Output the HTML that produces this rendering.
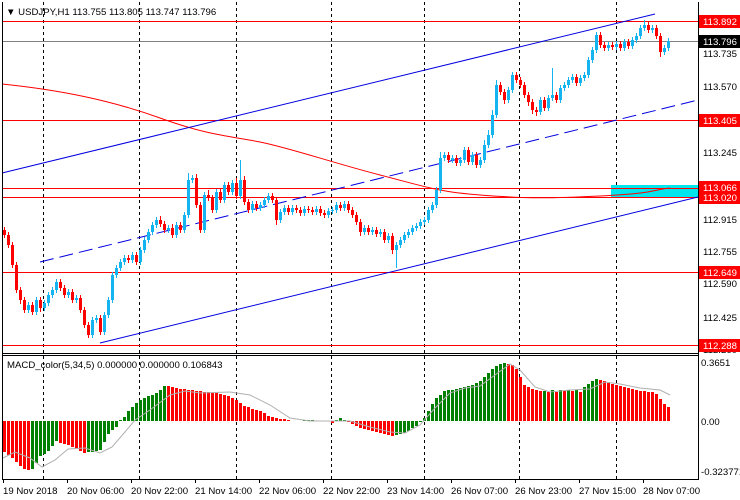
<!DOCTYPE html>
<html><head><meta charset="utf-8"><style>
html,body{margin:0;padding:0;background:#fff;width:740px;height:500px;overflow:hidden}
svg{display:block;font-family:"Liberation Sans",sans-serif;font-size:9.6px}
</style></head><body>
<svg width="740" height="500" xmlns="http://www.w3.org/2000/svg">
<rect width="740" height="500" fill="#fff"/>
<g stroke="#000" stroke-dasharray="3,3" stroke-width="1">
<line x1="43.5" y1="2" x2="43.5" y2="479"/><line x1="139.5" y1="2" x2="139.5" y2="479"/>
<line x1="236.5" y1="2" x2="236.5" y2="479"/><line x1="331.5" y1="2" x2="331.5" y2="479"/>
<line x1="424.5" y1="2" x2="424.5" y2="479"/><line x1="519.5" y1="2" x2="519.5" y2="479"/>
<line x1="616.5" y1="2" x2="616.5" y2="479"/>
</g>
<rect x="611" y="185" width="87" height="12" fill="#00e5ee"/>
<g stroke="#f00" stroke-width="1">
<line x1="2" y1="21.5" x2="698" y2="21.5"/><line x1="2" y1="120.5" x2="698" y2="120.5"/>
<line x1="2" y1="188.5" x2="698" y2="188.5"/><line x1="2" y1="197.5" x2="698" y2="197.5"/>
<line x1="2" y1="272.5" x2="698" y2="272.5"/><line x1="2" y1="345.5" x2="698" y2="345.5"/>
</g>
<line x1="2" y1="41.5" x2="698" y2="41.5" stroke="#808080"/>
<path d="M2,84 C60,90 110,100 160,118 S230,136 260,142 S330,162 380,175 S440,192 480,195 S540,199 600,196 S650,190 670,188" fill="none" stroke="#f00"/>
<g stroke="#0000e0" fill="none">
<line x1="2" y1="173" x2="655" y2="14"/>
<line x1="40" y1="262" x2="698" y2="100" stroke-dasharray="14,6"/>
<line x1="100" y1="343" x2="698" y2="197"/>
</g>
<!-- red candles -->
<path fill="#f00" stroke="none" d="M3,230h3v5h-3zM7,235h3v10h-3zM11,245h3v20h-3zM15,265h3v25h-3zM19,290h3v10h-3zM23,300h3v10h-3zM31,305h3v7h-3zM39,300h3v8h-3zM59,282h3v6h-3zM63,288h3v7h-3zM71,292h3v8h-3zM79,298h3v12h-3zM83,310h3v15h-3zM87,325h3v10h-3zM99,318h3v14h-3zM127,258h3v2h-3zM135,255h3v7h-3zM159,220h3v4h-3zM163,224h3v6h-3zM171,228h3v7h-3zM179,225h3v5h-3zM195,178h3v27h-3zM199,205h3v25h-3zM207,195h3v3h-3zM211,198h3v12h-3zM219,192h3v8h-3zM227,185h3v7h-3zM235,183h3v13h-3zM243,180h3v22h-3zM247,202h3v8h-3zM255,204h3v4h-3zM271,196h3v4h-3zM275,200h3v20h-3zM287,208h3v4h-3zM295,208h3v2h-3zM299,210h3v3h-3zM307,209h3v1h-3zM311,210h3v2h-3zM319,209h3v4h-3zM323,213h3v2h-3zM339,205h3v3h-3zM347,204h3v6h-3zM351,210h3v5h-3zM355,215h3v7h-3zM359,222h3v10h-3zM367,228h3v4h-3zM375,230h3v4h-3zM383,232h3v8h-3zM391,236h3v14h-3zM447,155h3v5h-3zM455,158h3v5h-3zM467,150h3v12h-3zM475,155h3v10h-3zM499,85h3v7h-3zM503,92h3v8h-3zM515,75h3v5h-3zM519,80h3v5h-3zM523,85h3v10h-3zM527,95h3v7h-3zM531,102h3v8h-3zM535,110h3v2h-3zM543,100h3v8h-3zM555,95h3v5h-3zM575,77h3v6h-3zM599,35h3v10h-3zM603,45h3v3h-3zM611,45h3v2h-3zM619,44h3v4h-3zM627,42h3v4h-3zM647,25h3v5h-3zM655,28h3v8h-3zM659,36h3v16h-3z"/>
<path fill="none" stroke="#f00" d="M4.5,227V238M8.5,232V248M12.5,242V268M16.5,262V293M20.5,287V304M24.5,297V313M32.5,302V315M40.5,297V312M60.5,279V291M64.5,285V298M72.5,289V303M80.5,295V313M84.5,307V328M88.5,322V338M100.5,315V335M128.5,255V263M136.5,252V265M160.5,216V227M164.5,221V233M172.5,224V238M180.5,222V233M196.5,174V208M200.5,202V233M208.5,190V201M212.5,195V213M220.5,188V203M228.5,182V195M236.5,178V199M244.5,176V205M248.5,199V213M256.5,201V211M272.5,193V203M276.5,197V225M288.5,205V215M296.5,205V213M300.5,207V216M308.5,206V213M312.5,207V215M320.5,206V216M324.5,210V218M340.5,202V211M348.5,201V213M352.5,207V218M356.5,212V225M360.5,219V236M368.5,225V235M376.5,227V237M384.5,229V243M392.5,233V254M448.5,152V163M456.5,155V166M468.5,147V165M476.5,152V168M500.5,82V95M504.5,89V104M516.5,72V83M520.5,77V88M524.5,82V98M528.5,92V106M532.5,99V114M536.5,107V116M544.5,97V111M556.5,92V103M576.5,74V86M600.5,32V48M604.5,42V51M612.5,42V50M620.5,41V51M628.5,39V49M648.5,22V33M656.5,25V39M660.5,33V57"/>
<!-- blue candles -->
<path fill="#14b4f0" stroke="none" d="M27,305h3v5h-3zM35,300h3v12h-3zM43,303h3v5h-3zM47,295h3v8h-3zM51,290h3v5h-3zM55,282h3v8h-3zM67,292h3v3h-3zM75,298h3v2h-3zM91,320h3v15h-3zM95,318h3v2h-3zM103,315h3v17h-3zM107,300h3v15h-3zM111,275h3v25h-3zM115,268h3v7h-3zM119,262h3v6h-3zM123,258h3v4h-3zM131,255h3v5h-3zM139,250h3v12h-3zM143,240h3v10h-3zM147,232h3v8h-3zM151,225h3v7h-3zM155,220h3v5h-3zM167,228h3v2h-3zM175,225h3v10h-3zM183,215h3v15h-3zM187,180h3v35h-3zM191,178h3v2h-3zM203,195h3v35h-3zM215,192h3v18h-3zM223,185h3v15h-3zM231,183h3v9h-3zM239,180h3v16h-3zM251,204h3v6h-3zM259,205h3v3h-3zM263,200h3v5h-3zM267,196h3v4h-3zM279,212h3v8h-3zM283,208h3v4h-3zM291,208h3v4h-3zM303,209h3v4h-3zM315,209h3v3h-3zM327,211h3v4h-3zM331,210h3v1h-3zM335,205h3v5h-3zM343,204h3v4h-3zM363,228h3v4h-3zM371,230h3v2h-3zM379,232h3v2h-3zM387,236h3v4h-3zM395,245h3v5h-3zM399,240h3v5h-3zM403,235h3v5h-3zM407,232h3v3h-3zM411,228h3v4h-3zM415,226h3v2h-3zM419,222h3v4h-3zM423,220h3v2h-3zM427,210h3v10h-3zM431,205h3v5h-3zM435,190h3v15h-3zM439,158h3v32h-3zM443,155h3v3h-3zM451,158h3v2h-3zM459,160h3v3h-3zM463,150h3v10h-3zM471,155h3v7h-3zM479,160h3v5h-3zM483,145h3v15h-3zM487,135h3v10h-3zM491,115h3v20h-3zM495,85h3v30h-3zM507,90h3v10h-3zM511,75h3v15h-3zM539,100h3v12h-3zM547,98h3v10h-3zM551,95h3v3h-3zM559,88h3v12h-3zM563,85h3v3h-3zM567,80h3v5h-3zM571,77h3v3h-3zM579,78h3v5h-3zM583,75h3v3h-3zM587,60h3v15h-3zM591,50h3v10h-3zM595,35h3v15h-3zM607,45h3v3h-3zM615,44h3v3h-3zM623,42h3v6h-3zM631,40h3v6h-3zM635,36h3v4h-3zM639,28h3v8h-3zM643,25h3v3h-3zM651,28h3v2h-3zM663,48h3v4h-3zM667,41h3v7h-3z"/>
<path fill="none" stroke="#14b4f0" d="M28.5,302V313M36.5,297V315M44.5,300V311M48.5,292V306M52.5,287V298M56.5,279V293M68.5,289V298M76.5,295V303M92.5,317V338M96.5,315V323M104.5,312V335M108.5,297V318M112.5,272V303M116.5,265V278M120.5,259V271M124.5,255V265M132.5,252V263M140.5,247V265M144.5,237V253M148.5,229V243M152.5,222V235M156.5,217V228M168.5,225V233M176.5,222V238M184.5,212V233M188.5,173V218M192.5,175V183M204.5,192V233M216.5,189V213M224.5,182V203M232.5,180V195M240.5,160V199M252.5,201V213M260.5,202V211M264.5,197V208M268.5,193V203M280.5,209V223M284.5,205V215M292.5,205V215M304.5,206V216M316.5,206V215M328.5,208V218M332.5,207V214M336.5,202V213M344.5,201V211M364.5,225V235M372.5,227V235M380.5,229V237M388.5,233V243M396.5,242V268M400.5,237V248M404.5,232V243M408.5,229V238M412.5,225V235M416.5,223V231M420.5,219V229M424.5,217V225M428.5,207V223M432.5,202V213M436.5,187V208M440.5,152V193M444.5,152V161M452.5,155V163M460.5,157V166M464.5,147V163M472.5,152V165M480.5,157V168M484.5,140V163M488.5,130V148M492.5,110V138M496.5,80V118M508.5,87V103M512.5,72V93M540.5,97V115M548.5,95V111M552.5,68V101M560.5,85V103M564.5,82V91M568.5,77V88M572.5,74V83M580.5,75V86M584.5,72V81M588.5,57V78M592.5,47V63M596.5,32V53M608.5,42V51M616.5,41V50M624.5,39V51M632.5,37V49M636.5,33V43M640.5,25V39M644.5,20V31M652.5,25V33M664.5,45V55M668.5,38V51"/>
<!-- MACD -->
<path fill="#f00" d="M3,421V452h3V421zM7,421V455h3V421zM11,421V458h3V421zM15,421V462h3V421zM19,421V466h3V421zM23,421V469h3V421zM27,421V470h3V421zM59,421V443h3V421zM63,421V444h3V421zM67,421V445h3V421zM71,421V447h3V421zM75,421V449h3V421zM79,421V451h3V421zM83,421V453h3V421zM167,421V386h3V421zM171,421V387h3V421zM175,421V388h3V421zM179,421V389h3V421zM183,421V389h3V421zM187,421V390h3V421zM191,421V390h3V421zM195,421V391h3V421zM199,421V391h3V421zM203,421V392h3V421zM207,421V392h3V421zM211,421V393h3V421zM215,421V393h3V421zM219,421V394h3V421zM223,421V395h3V421zM227,421V396h3V421zM231,421V398h3V421zM235,421V400h3V421zM239,421V403h3V421zM243,421V406h3V421zM247,421V407h3V421zM251,421V409h3V421zM255,421V410h3V421zM259,421V411h3V421zM263,421V413h3V421zM267,421V416h3V421zM271,421V417h3V421zM275,421V418h3V421zM279,421V419h3V421zM283,421V419h3V421zM287,421V420h3V421zM331,421V423h3V421zM347,421V422h3V421zM351,421V424h3V421zM355,421V426h3V421zM359,421V428h3V421zM363,421V429h3V421zM367,421V430h3V421zM371,421V431h3V421zM375,421V432h3V421zM379,421V433h3V421zM383,421V434h3V421zM387,421V435h3V421zM391,421V436h3V421zM507,421V364h3V421zM511,421V365h3V421zM515,421V369h3V421zM519,421V377h3V421zM523,421V385h3V421zM527,421V387h3V421zM531,421V389h3V421zM535,421V390h3V421zM539,421V391h3V421zM547,421V392h3V421zM555,421V392h3V421zM563,421V391h3V421zM571,421V391h3V421zM579,421V392h3V421zM599,421V380h3V421zM603,421V381h3V421zM607,421V383h3V421zM611,421V384h3V421zM615,421V385h3V421zM619,421V386h3V421zM623,421V387h3V421zM627,421V388h3V421zM631,421V389h3V421zM635,421V390h3V421zM639,421V391h3V421zM643,421V391h3V421zM647,421V392h3V421zM651,421V392h3V421zM655,421V394h3V421zM659,421V399h3V421zM663,421V404h3V421zM667,421V407h3V421z"/>
<path fill="#008000" d="M31,421V469h3V421zM35,421V463h3V421zM39,421V456h3V421zM43,421V454h3V421zM47,421V451h3V421zM51,421V446h3V421zM55,421V441h3V421zM87,421V452h3V421zM91,421V452h3V421zM95,421V451h3V421zM99,421V450h3V421zM103,421V442h3V421zM107,421V434h3V421zM111,421V430h3V421zM115,421V427h3V421zM119,421V420h3V421zM123,421V417h3V421zM127,421V411h3V421zM131,421V407h3V421zM135,421V403h3V421zM139,421V400h3V421zM143,421V398h3V421zM147,421V396h3V421zM151,421V395h3V421zM155,421V393h3V421zM159,421V390h3V421zM163,421V386h3V421zM303,421V420h3V421zM307,421V420h3V421zM311,421V420h3V421zM335,421V420h3V421zM339,421V418h3V421zM343,421V420h3V421zM395,421V435h3V421zM399,421V434h3V421zM403,421V433h3V421zM407,421V431h3V421zM411,421V428h3V421zM415,421V426h3V421zM419,421V422h3V421zM423,421V418h3V421zM427,421V411h3V421zM431,421V404h3V421zM435,421V398h3V421zM439,421V395h3V421zM443,421V391h3V421zM447,421V390h3V421zM451,421V390h3V421zM455,421V389h3V421zM459,421V388h3V421zM463,421V387h3V421zM467,421V386h3V421zM471,421V385h3V421zM475,421V383h3V421zM479,421V381h3V421zM483,421V377h3V421zM487,421V373h3V421zM491,421V369h3V421zM495,421V366h3V421zM499,421V364h3V421zM503,421V363h3V421zM543,421V391h3V421zM551,421V390h3V421zM559,421V390h3V421zM567,421V390h3V421zM575,421V390h3V421zM583,421V387h3V421zM587,421V384h3V421zM591,421V381h3V421zM595,421V379h3V421z"/>
<path fill="none" stroke="#b0b0b0" d="M3,458L15,452L30,458L42,467L55,460L68,449L85,448L100,453L112,447L125,432L135,420L150,410L170,395L185,391L200,393L230,392L250,395L270,405L290,418L310,421L350,421L370,427L390,432L405,433L420,425L435,408L450,393L465,388L480,386L495,375L510,364L520,370L535,387L550,392L570,390L590,389L605,382L620,384L640,388L660,390L670,395"/>
<g stroke="#000" fill="none">
<line x1="2.5" y1="2" x2="2.5" y2="479"/><line x1="698.5" y1="2" x2="698.5" y2="479"/>
<line x1="2" y1="353.5" x2="699" y2="353.5"/><line x1="2" y1="355.5" x2="699" y2="355.5"/>
<line x1="2" y1="479.5" x2="699" y2="479.5"/>
<path d="M3.5,479v4M67.5,479v4M131.5,479v4M195.5,479v4M259.5,479v4M323.5,479v4M387.5,479v4M451.5,479v4M515.5,479v4M579.5,479v4M643.5,479v4"/>
</g>
<text x="6" y="15" fill="#000">▼ USDJPY,H1  113.755 113.805 113.747 113.796</text>
<text x="7" y="368" fill="#000">MACD_color(5,34,5) 0.000000 0.000000 0.106843</text>
<g fill="#000">
<text x="703" y="57">113.735</text><text x="703" y="90">113.570</text>
<text x="703" y="156">113.245</text><text x="703" y="223">112.915</text>
<text x="703" y="255">112.755</text><text x="703" y="287">112.590</text>
<text x="703" y="321">112.425</text><text x="703" y="353">112.260</text>
<text x="701" y="366">0.3651</text><text x="701" y="425">0.00</text>
<text x="701" y="475">-0.323771</text>
</g>
<rect x="699" y="15" width="41" height="13" fill="#f00"/><text x="703" y="25" fill="#fff">113.892</text>
<rect x="699" y="35" width="41" height="13" fill="#000"/><text x="703" y="45" fill="#fff">113.796</text>
<rect x="699" y="114" width="41" height="13" fill="#f00"/><text x="703" y="124" fill="#fff">113.405</text>
<rect x="699" y="181" width="41" height="13" fill="#f00"/><text x="703" y="191" fill="#fff">113.066</text>
<rect x="699" y="191" width="41" height="13" fill="#f00"/><text x="703" y="201" fill="#fff">113.020</text>
<rect x="699" y="266" width="41" height="13" fill="#f00"/><text x="703" y="276" fill="#fff">112.649</text>
<rect x="699" y="339" width="41" height="13" fill="#f00"/><text x="703" y="349" fill="#fff">112.288</text>
<g fill="#000">
<text x="3" y="494">19 Nov 2018</text><text x="67" y="494">20 Nov 06:00</text>
<text x="131" y="494">20 Nov 22:00</text><text x="195" y="494">21 Nov 14:00</text>
<text x="259" y="494">22 Nov 06:00</text><text x="323" y="494">22 Nov 22:00</text>
<text x="387" y="494">23 Nov 14:00</text><text x="451" y="494">26 Nov 07:00</text>
<text x="515" y="494">26 Nov 23:00</text><text x="579" y="494">27 Nov 15:00</text>
<text x="643" y="494">28 Nov 07:00</text>
</g>
</svg>
</body></html>
